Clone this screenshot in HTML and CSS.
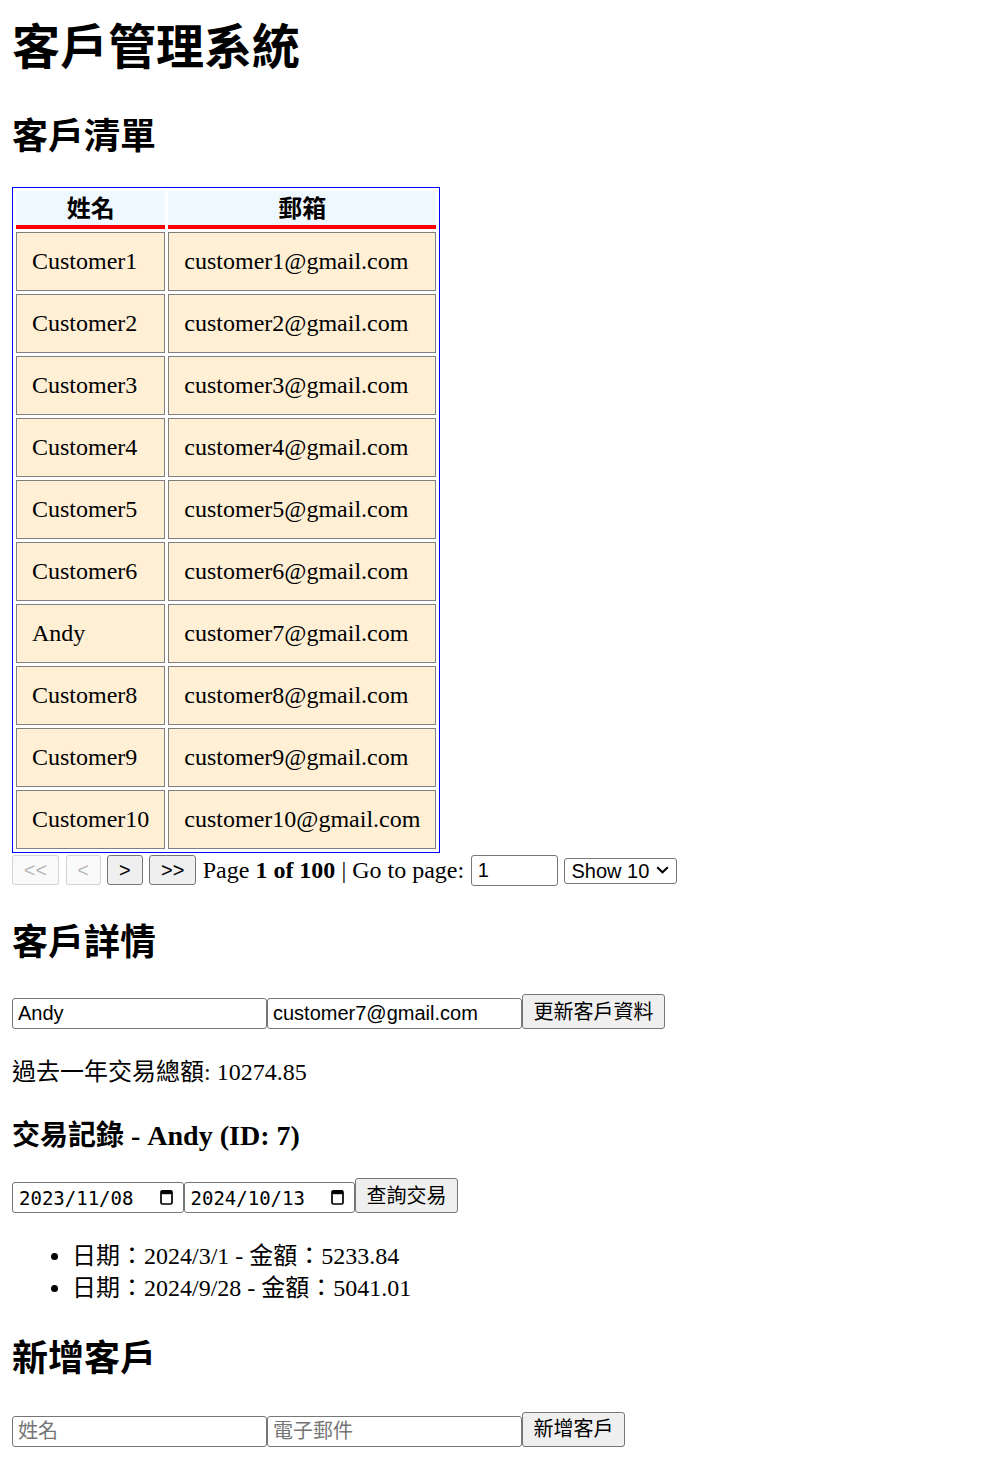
FILE: index.html
```html
<!DOCTYPE html>
<html lang="zh-Hant">
<head>
<meta charset="utf-8">
<title>客戶管理系統</title>
<link rel="stylesheet" href="styles.css">
</head>
<body>
<h1 class="title">客戶管理系統</h1>

<h2 class="section-title first">客戶清單</h2>
<div class="table-wrap">
  <table class="customers">
    <thead>
      <tr><th>姓名</th><th>郵箱</th></tr>
    </thead>
    <tbody>
      <tr><td>Customer1</td><td>customer1@gmail.com</td></tr>
      <tr><td>Customer2</td><td>customer2@gmail.com</td></tr>
      <tr><td>Customer3</td><td>customer3@gmail.com</td></tr>
      <tr><td>Customer4</td><td>customer4@gmail.com</td></tr>
      <tr><td>Customer5</td><td>customer5@gmail.com</td></tr>
      <tr><td>Customer6</td><td>customer6@gmail.com</td></tr>
      <tr><td>Andy</td><td>customer7@gmail.com</td></tr>
      <tr><td>Customer8</td><td>customer8@gmail.com</td></tr>
      <tr><td>Customer9</td><td>customer9@gmail.com</td></tr>
      <tr><td>Customer10</td><td>customer10@gmail.com</td></tr>
    </tbody>
  </table>
</div>
<div class="pagination">
  <button class="btn btn-sm" disabled>&lt;&lt;</button>
  <button class="btn btn-sm" disabled>&lt;</button>
  <button class="btn btn-sm">&gt;</button>
  <button class="btn btn-sm">&gt;&gt;</button>
  <span class="page-info">Page <strong>1 of 100</strong> | Go to page:</span>
  <input class="page-input" type="text" value="1">
  <span class="select-wrap">
    <select class="page-size"><option>Show 10</option></select>
    <svg class="chevron" width="13" height="8" viewBox="0 0 13 8"><polyline points="1.2,1.2 6.5,6.3 11.8,1.2" fill="none" stroke="#000" stroke-width="2"/></svg>
  </span>
</div>

<h2 class="section-title detail">客戶詳情</h2>
<div class="form-row detail-row">
  <input class="field" type="text" value="Andy">
  <input class="field" type="text" value="customer7@gmail.com">
  <button class="btn">更新客戶資料</button>
</div>
<p class="total">過去一年交易總額: 10274.85</p>

<h3 class="sub-title">交易記錄 - Andy (ID: 7)</h3>
<div class="form-row date-row">
  <span class="date-wrap">
    <input class="date-field" type="text" value="2023/11/08">
    <svg class="cal" width="13" height="16" viewBox="0 0 13 16"><rect x="1" y="1.8" width="11" height="13.2" rx="1.4" fill="none" stroke="#000" stroke-width="1.7"/><rect x="1" y="1.8" width="11" height="3.4" fill="#000"/></svg>
  </span>
  <span class="date-wrap">
    <input class="date-field" type="text" value="2024/10/13">
    <svg class="cal" width="13" height="16" viewBox="0 0 13 16"><rect x="1" y="1.8" width="11" height="13.2" rx="1.4" fill="none" stroke="#000" stroke-width="1.7"/><rect x="1" y="1.8" width="11" height="3.4" fill="#000"/></svg>
  </span>
  <button class="btn">查詢交易</button>
</div>
<ul class="tx-list">
  <li>日期：2024/3/1 - 金額：5233.84</li>
  <li>日期：2024/9/28 - 金額：5041.01</li>
</ul>

<h2 class="section-title add">新增客戶</h2>
<div class="form-row add-row">
  <input class="field" type="text" placeholder="姓名">
  <input class="field" type="text" placeholder="電子郵件">
  <button class="btn">新增客戶</button>
</div>
</body>
</html>
```
FILE: styles.css
```css
html, body {
  background: #fff;
}
body {
  margin: 0;
  padding: 0 12px 12px;
  font-family: "Liberation Serif", "Noto Sans CJK TC", serif;
  font-size: 24px;
  color: #000;
}

.title {
  margin: 20px 0 0;
  font-size: 48px;
  line-height: 56px;
  font-weight: 700;
}

.section-title {
  margin: 0;
  font-size: 36px;
  line-height: 44px;
  font-weight: 700;
}
.section-title.first { margin-top: 38.5px; }
.section-title.detail { margin-top: 35px; }
.section-title.add { margin-top: 33px; }

.sub-title {
  margin: 34px 0 0;
  font-size: 28px;
  line-height: 32px;
  font-weight: 700;
}

.table-wrap {
  margin-top: 28.5px;
}
.customers {
  border: 1px solid #0000ff;
  border-collapse: separate;
  border-spacing: 3px;
}
.customers th {
  background: #f0f8ff;
  border-bottom: 4px solid #ff0000;
  padding: 2px 15px 0;
  line-height: 32px;
  font-weight: 700;
  text-align: center;
}
.customers td {
  background: #ffefd5;
  border: 1px solid #808080;
  padding: 0 15px;
  line-height: 57px;
  white-space: nowrap;
}

.pagination {
  display: flex;
  align-items: center;
  gap: 6.67px;
  height: 32px;
  margin-top: 1px;
}
.page-info {
  white-space: pre;
  line-height: 28px;
}

.btn {
  box-sizing: border-box;
  height: 35px;
  margin: 0;
  padding: 0 10.5px;
  border: 1px solid #767676;
  border-radius: 3px;
  background: #efefef;
  color: #000;
  font-family: "Liberation Sans", Arial, "Noto Sans CJK TC", sans-serif;
  font-size: 20px;
  line-height: 1;
}
.btn-sm {
  height: 30px;
  padding: 0 10.75px;
}
.btn:disabled {
  color: rgba(16, 16, 16, 0.3);
  border-color: rgba(118, 118, 118, 0.3);
  background: rgba(239, 239, 239, 0.3);
}

.page-input {
  box-sizing: border-box;
  width: 87px;
  height: 31px;
  margin: 0;
  padding: 0 6px;
  border: 1px solid #767676;
  border-radius: 3px;
  font-family: "Liberation Sans", Arial, sans-serif;
  font-size: 20px;
  color: #000;
}

.select-wrap {
  position: relative;
  display: block;
  height: 26px;
}
.page-size {
  appearance: none;
  -webkit-appearance: none;
  box-sizing: border-box;
  width: 113px;
  height: 26px;
  margin: 0;
  padding: 0 0 0 6px;
  border: 1px solid #767676;
  border-radius: 3px;
  background: #fff;
  color: #000;
  font-family: "Liberation Sans", Arial, sans-serif;
  font-size: 20px;
  line-height: 24px;
}
.chevron {
  position: absolute;
  left: 92px;
  top: 9px;
  pointer-events: none;
}

.form-row {
  display: flex;
  align-items: flex-end;
}
.detail-row { margin-top: 29px; }
.date-row { margin-top: 26px; }
.add-row { margin-top: 30.5px; }

.field {
  box-sizing: border-box;
  width: 255px;
  height: 31px;
  margin: 0;
  padding: 0 5px;
  border: 1px solid #767676;
  border-radius: 3px;
  background: #fff;
  color: #000;
  font-family: "Liberation Sans", Arial, "Noto Sans CJK TC", sans-serif;
  font-size: 20px;
}
.field::placeholder {
  color: #757575;
}

.total {
  margin: 29px 0 0;
  line-height: 28px;
}

.date-wrap {
  position: relative;
  display: block;
  height: 31px;
}
.date-field {
  box-sizing: border-box;
  width: 171.5px;
  height: 31px;
  margin: 0;
  padding: 0 6px;
  border: 1px solid #767676;
  border-radius: 3px;
  background: #fff;
  color: #000;
  font-family: "DejaVu Sans Mono", "Liberation Mono", monospace;
  font-size: 19px;
}
.cal {
  position: absolute;
  right: 11px;
  top: 7px;
  pointer-events: none;
}

.tx-list {
  margin: 27px 0 0;
  padding-left: 60px;
}
.tx-list li {
  line-height: 32px;
}
```
